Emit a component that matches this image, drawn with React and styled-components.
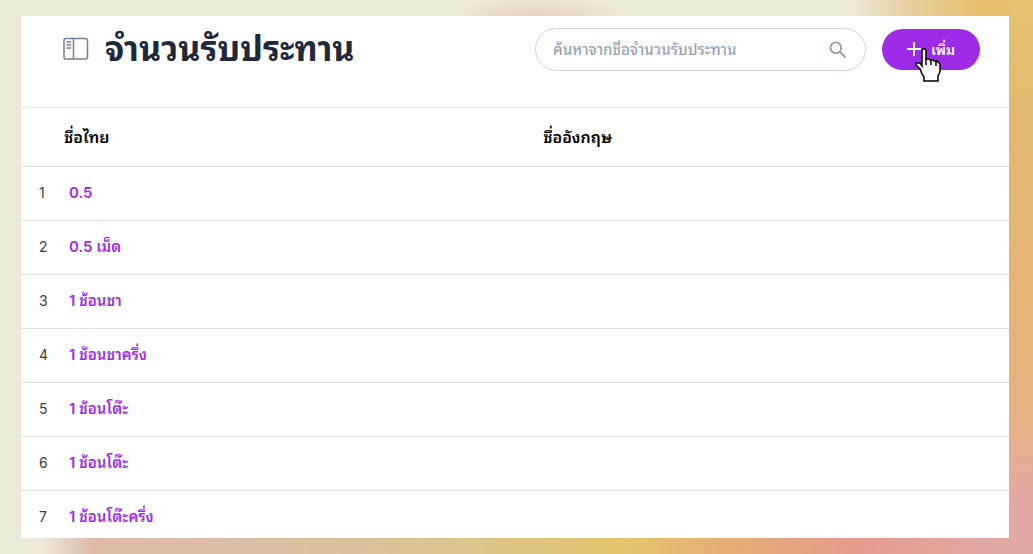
import styled, { createGlobalStyle } from "styled-components";

const GlobalStyle = createGlobalStyle`
* {
  box-sizing: border-box;
}
body {
  margin: 0;
  font-family: Inter, "Noto Sans Thai Looped", Loma, Waree, Garuda, Umpush, "Noto Sans", sans-serif;
}
`;

const rows = [
  "0.5",
  "0.5 เม็ด",
  "1 ช้อนชา",
  "1 ช้อนชาครึ่ง",
  "1 ช้อนโต๊ะ",
  "1 ช้อนโต๊ะ",
  "1 ช้อนโต๊ะครึ่ง",
];

const App = () => {
  return (
    <Page>
      <GlobalStyle />
      <Panel>
        <Header>
          <MenuButton type="button" aria-label="เมนู">
            <PanelIcon />
          </MenuButton>
          <Title>จำนวนรับประทาน</Title>
          <SearchBox>
            <SearchInput
              type="text"
              aria-label="ค้นหา"
              placeholder="ค้นหาจากชื่อจำนวนรับประทาน"
            />
            <SearchIcon />
          </SearchBox>
          <AddButton type="button">
            <PlusIcon />
            เพิ่ม
            <Pointer />
          </AddButton>
        </Header>
        <Table>
          <colgroup>
            <NumberCol />
            <NameCol />
            <col />
          </colgroup>
          <thead>
            <tr>
              <HeadCell $first colSpan={2}>ชื่อไทย</HeadCell>
              <HeadCell>ชื่ออังกฤษ</HeadCell>
            </tr>
          </thead>
          <tbody>
            {rows.map((name, index) => (
              <tr key={index}>
                <NumberCell>{index + 1}</NumberCell>
                <Cell>
                  <NameLink href="#">{name}</NameLink>
                </Cell>
                <Cell />
              </tr>
            ))}
          </tbody>
        </Table>
      </Panel>
    </Page>
  );
};

const PanelIcon = () => (
  <svg width="26" height="24" viewBox="0 0 26 24" fill="none" stroke="#718096">
    <rect x="1" y="1.5" width="23.5" height="20.5" rx="2" strokeWidth="1.5" />
    <path d="M10.5 1.5V22" strokeWidth="1.5" />
    <path d="M3.5 5H8M3.5 8H8M3.5 11H8" strokeWidth="1.3" />
  </svg>
);

const SearchIcon = () => (
  <svg width="18" height="18" viewBox="0 0 18 18" fill="none" stroke="#94a3b8">
    <circle cx="6.8" cy="6.8" r="5.4" strokeWidth="1.9" />
    <path d="M10.8 10.8L16.5 16.5" strokeWidth="2.2" />
  </svg>
);

const PlusIcon = () => (
  <svg width="14" height="14" viewBox="0 0 14 14" stroke="#fff" strokeWidth="2">
    <path d="M7 0V14M0 7H14" />
  </svg>
);

const Pointer = () => (
  <PointerSvg viewBox="0 0 26 34" aria-hidden="true">
    <path
      d="M8 1H10L11 2V11H14L15 12H18L19 13H22L25 16V24L23 28V33H9V29L7 26L5 21L1 17V15H5L7 18V2Z"
      fill="#fff"
      stroke="#000"
      strokeWidth="1.5"
    />
    <path d="M11 10V17M16 12V17M21 13V18" stroke="#000" strokeWidth="1.5" />
  </PointerSvg>
);

const Page = styled.div`
min-height: 100vh;
padding: 16px 24px 16px 21px;
background-color: #edeadc;
background-repeat: no-repeat;
background-image:
  linear-gradient(#e6c470, #e0b970 20%, #e5b375 55%, #e5b183 75%, #e2aaa2 90%, #e0a9a4),
  radial-gradient(ellipse 90px 20px at 52% 16px, #e8d0c2, transparent),
  linear-gradient(to right, transparent 82%, #e6cfa0 88%, #e6c06c 95%),
  linear-gradient(to right, #edeadc 4%, #dfbaa9 9%, #dcbfa6 25%, #dbc595 42%, #e3c66d 60%, #e5ae74 70%, #e59a8c 83%, #e3a5a0 93%, #dcb0a8);
background-size: 24px 100%, 100% 16px, 100% 16px, 100% 16px;
background-position: right top, left top, left top, left bottom;
`;

const Panel = styled.main`
background-color: #fff;
height: calc(100vh - 32px);
overflow: hidden;
`;

const Header = styled.header`
display: flex;
align-items: flex-start;
height: 92px;
padding: 12px 29px 0 42px;
border-bottom: 1px solid #e2e8f0;
`;

const MenuButton = styled.button`
display: flex;
align-items: center;
height: 41px;
padding: 0;
border: none;
background: none;
`;

const Title = styled.h1`
flex: 1;
margin: 0 0 0 16px;
font-size: 34px;
line-height: 42px;
font-weight: 700;
color: #1e293b;
white-space: nowrap;
`;

const SearchBox = styled.div`
display: flex;
align-items: center;
width: 331px;
height: 43px;
padding: 0 18px 0 17px;
border: 1px solid #cbd5e1;
border-radius: 22px;
`;

const SearchInput = styled.input`
flex: 1;
min-width: 0;
padding: 0;
border: none;
outline: none;
background: none;
font-family: inherit;
font-size: 15px;
font-weight: 500;
&::placeholder {
  color: #94a3b8;
}
`;

const AddButton = styled.button`
position: relative;
display: flex;
align-items: center;
justify-content: center;
gap: 10px;
width: 98px;
height: 41px;
margin: 1px 0 0 16px;
padding: 0 0 2px;
border: none;
border-radius: 21px;
background-color: #9d2be8;
color: #fff;
font-family: inherit;
font-size: 14px;
font-weight: 600;
`;

/* mouse pointer resting on the button */
const PointerSvg = styled.svg`
position: absolute;
left: 33px;
top: 19px;
width: 26px;
height: 34px;
`;

const Table = styled.table`
width: 100%;
table-layout: fixed;
border-collapse: collapse;
font-size: 15px;
line-height: 20px;
`;

const NumberCol = styled.col`
width: 48px;
`;

const NameCol = styled.col`
width: 48%;
`;

const HeadCell = styled.th`
height: 58px;
padding: 0 0 0 ${(props) => (props.$first ? "43px" : "0")};
border-bottom: 1px solid #e0e0e0;
text-align: left;
font-size: 16px;
font-weight: 600;
color: #000;
`;

const NumberCell = styled.td`
height: 54px;
padding: 0 0 0 18px;
border-bottom: 1px solid #e0e0e0;
font-size: 14px;
color: #404040;
`;

const Cell = styled.td`
padding: 0;
border-bottom: 1px solid #e0e0e0;
`;

const NameLink = styled.a`
color: #9d2be8;
font-weight: 600;
text-decoration: none;
`;

export default App;
